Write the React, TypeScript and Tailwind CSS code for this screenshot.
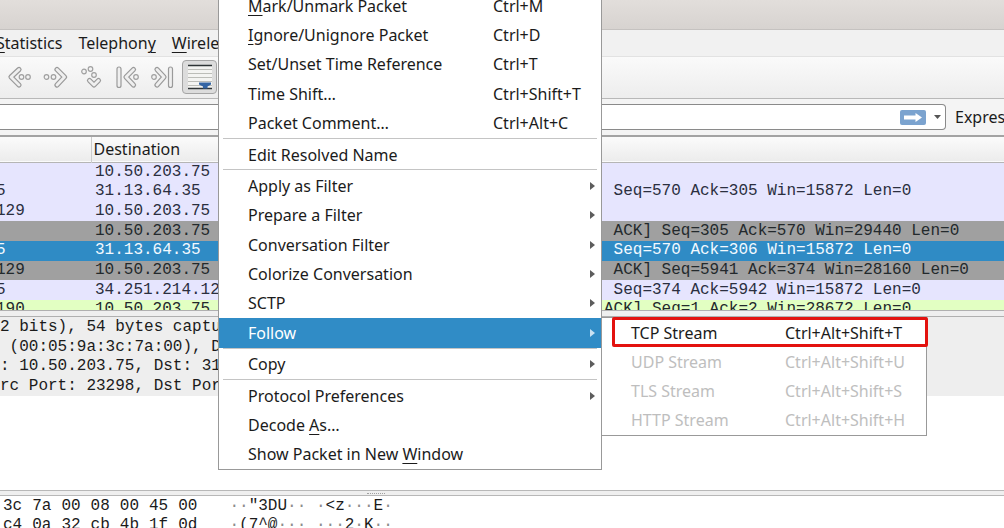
import { ReactNode } from "react";

type Packet = {
  source: string;
  destination: string;
  info: string;
  tone: string;
};

type MenuEntry = {
  label: ReactNode;
  shortcut?: string;
  submenu?: boolean;
  active?: boolean;
  disabled?: boolean;
};

const TCP = "bg-[#e6e5fe] text-[#2b2f3f]";
const CLOSING = "bg-[#a0a0a0] text-[#23292c]";
const SELECTED = "bg-[#2f8bc5] text-[#f2f9ff]";
const HTTP = "bg-[#e2ffc2] text-[#23292c]";

const PACKETS: Packet[] = [
  { source: "", destination: "10.50.203.75", info: "", tone: TCP },
  { source: "5", destination: "31.13.64.35", info: " Seq=570 Ack=305 Win=15872 Len=0", tone: TCP },
  { source: "129", destination: "10.50.203.75", info: "", tone: TCP },
  { source: "", destination: "10.50.203.75", info: " ACK] Seq=305 Ack=570 Win=29440 Len=0", tone: CLOSING },
  { source: "5", destination: "31.13.64.35", info: " Seq=570 Ack=306 Win=15872 Len=0", tone: SELECTED },
  { source: "129", destination: "10.50.203.75", info: " ACK] Seq=5941 Ack=374 Win=28160 Len=0", tone: CLOSING },
  { source: "5", destination: "34.251.214.12", info: " Seq=374 Ack=5942 Win=15872 Len=0", tone: TCP },
  { source: "190", destination: "10.50.203.75", info: "ACK] Seq=1 Ack=2 Win=28672 Len=0", tone: HTTP },
];

const DETAILS = [
  "2 bits), 54 bytes captu",
  " (00:05:9a:3c:7a:00), D",
  ": 10.50.203.75, Dst: 31",
  "rc Port: 23298, Dst Por",
];

const BYTES = [
  { hex: ["3c", "7a", "00", "08", "00", "45", "00"], ascii: '··"3DU·· ·<z···E·' },
  { hex: ["c4", "0a", "32", "cb", "4b", "1f", "0d"], ascii: "·(7^@··· ···2·K··" },
];

const Key = ({ children }: { children: ReactNode }) => (
  <span className="underline decoration-1 underline-offset-3">{children}</span>
);

const MENU_GROUPS: MenuEntry[][] = [
  [
    { label: <><Key>M</Key>ark/Unmark Packet</>, shortcut: "Ctrl+M" },
    { label: <><Key>I</Key>gnore/Unignore Packet</>, shortcut: "Ctrl+D" },
    { label: "Set/Unset Time Reference", shortcut: "Ctrl+T" },
    { label: "Time Shift…", shortcut: "Ctrl+Shift+T" },
    { label: "Packet Comment…", shortcut: "Ctrl+Alt+C" },
  ],
  [{ label: "Edit Resolved Name" }],
  [
    { label: "Apply as Filter", submenu: true },
    { label: "Prepare a Filter", submenu: true },
    { label: "Conversation Filter", submenu: true },
    { label: "Colorize Conversation", submenu: true },
    { label: "SCTP", submenu: true },
    { label: "Follow", submenu: true, active: true },
  ],
  [{ label: "Copy", submenu: true }],
  [
    { label: "Protocol Preferences", submenu: true },
    { label: <>Decode <Key>A</Key>s…</> },
    { label: <>Show Packet in New <Key>W</Key>indow</> },
  ],
];

const FOLLOW_MENU: MenuEntry[] = [
  { label: "TCP Stream", shortcut: "Ctrl+Alt+Shift+T" },
  { label: "UDP Stream", shortcut: "Ctrl+Alt+Shift+U", disabled: true },
  { label: "TLS Stream", shortcut: "Ctrl+Alt+Shift+S", disabled: true },
  { label: "HTTP Stream", shortcut: "Ctrl+Alt+Shift+H", disabled: true },
];

// Grey outline with a light core, shared by all the navigation arrows
const ArrowIcon = ({ d, dots }: { d: string; dots: [number, number][] }) => (
  <svg viewBox="0 0 26 26" className="h-[26px] w-[26px]" fill="none" strokeLinecap="round" strokeLinejoin="round">
    <path d={d} stroke="#9a9a9a" strokeWidth="5.2" />
    <path d={d} stroke="#efefef" strokeWidth="2.8" />
    {dots.map(([cx, cy]) => (
      <circle key={`${cx}-${cy}`} cx={cx} cy={cy} r="2.3" fill="#f3f3f3" stroke="#a0a0a0" strokeWidth="1.2" />
    ))}
  </svg>
);

const NAV_ICONS: { label: string; d: string; dots: [number, number][] }[] = [
  { label: "Previous packet", d: "M13 5.5 L5 13 L13 21", dots: [[15.5, 13], [22, 13]] },
  { label: "Next packet", d: "M15 5.5 L22.5 13 L15 21", dots: [[4.5, 13], [11.5, 13]] },
  { label: "Go to packet", d: "M11.5 16.5 L16 21 L20.5 16.5", dots: [[6, 7.5], [12.5, 5], [16, 11]] },
  { label: "First packet", d: "M5 5 V21.5 M19.5 5.5 L12 13 L19.5 21", dots: [[22, 13]] },
  { label: "Last packet", d: "M20.5 5 V21.5 M7 5.5 L14 13 L7 21", dots: [[4, 13]] },
];

const AutoScrollIcon = () => (
  <svg viewBox="0 0 24 26" className="h-[26px] w-6" fill="none">
    <rect y="1" width="24" height="24" fill="#f4f4f2" />
    <path d="M0 5.5H24M0 9.5H24M0 13.5H24M0 17.5H24M0 21.5H24" stroke="#bcbdb8" />
    <path d="M0 1.5H24M0 24.5H24" stroke="#2e3436" strokeWidth="1.4" />
    <path d="M11 18.5H23V20.5L19.5 22.5V24.5H15V22.5L11 20.5Z" fill="#3465a4" />
  </svg>
);

const MenuItem = ({ entry, nested }: { entry: MenuEntry; nested?: boolean }) => (
  <button
    type="button"
    role="menuitem"
    disabled={entry.disabled}
    className={`flex min-h-0 w-full flex-1 items-center whitespace-nowrap text-left ${
      entry.active ? "bg-[#308cc6] text-white" : entry.disabled ? "text-[#bebebe]" : "text-[#1b1b1b]"
    }`}
  >
    <span className={nested ? "w-[183px] pl-[29px]" : "w-[274px] pl-[29px]"}>{entry.label}</span>
    <span className="flex-1">{entry.shortcut}</span>
    {entry.submenu && (
      <svg viewBox="0 0 5 8" className={`mr-1.5 h-2 w-[5px] ${entry.active ? "fill-[#c9e2f2]" : "fill-[#5c5c5c]"}`}>
        <path d="M0 0L5 4L0 8Z" />
      </svg>
    )}
  </button>
);

const ContextMenu = () => (
  <div
    role="menu"
    className="absolute -top-[10px] left-[218px] flex h-[480px] w-[384px] flex-col border border-[#999999] bg-white"
  >
    {MENU_GROUPS.map((group, index) => (
      <div key={index} className="contents">
        {index > 0 && <div role="separator" className="mx-1 mb-px h-px bg-[#c4c4c4]" />}
        {group.map((entry, i) => (
          <MenuItem key={i} entry={entry} />
        ))}
      </div>
    ))}
  </div>
);

const FollowMenu = () => (
  <div
    role="menu"
    className="absolute left-[601px] top-[317px] flex h-[119px] w-[326px] flex-col border border-[#999999] bg-white"
  >
    {FOLLOW_MENU.map((entry, i) => (
      <MenuItem key={i} entry={entry} nested />
    ))}
    <div className="pointer-events-none absolute -right-[2px] -top-px left-[10px] h-[30px] rounded-xs border-3 border-[#e3120f]" />
  </div>
);

export default function App() {
  return (
    <div className="relative flex h-screen flex-col overflow-hidden bg-[#efefef] font-['Noto_Sans',sans-serif] text-base text-[#1b1b1b]">
      <div className="h-[30px] shrink-0 border-b border-[#c5c2c0] bg-linear-to-b from-[#e2dedb] to-[#d7d3d0]" />

      <nav className="-ml-1 flex h-[26px] shrink-0 items-center gap-4 bg-[#f1f1f1]">
        <button type="button"><Key>S</Key>tatistics</button>
        <button type="button">Telephon<Key>y</Key></button>
        <button type="button"><Key>W</Key>ireless</button>
      </nav>

      <div className="flex h-[43px] shrink-0 items-center gap-1.5 border-b border-t border-b-[#b8b8b8] border-t-[#e2e2e2] bg-linear-to-b from-[#fafafa] to-[#ededed] pb-0.5 pl-1.5">
        <div className="flex gap-2.5">
          {NAV_ICONS.map((icon) => (
            <button key={icon.label} type="button" aria-label={icon.label}>
              <ArrowIcon d={icon.d} dots={icon.dots} />
            </button>
          ))}
        </div>
        <button
          type="button"
          aria-label="Auto scroll"
          className="flex h-[34px] w-[35px] items-center justify-center rounded-sm border border-[#a5a5a5] bg-[#dcdcdc]"
        >
          <AutoScrollIcon />
        </button>
      </div>

      <div className="flex h-[38px] shrink-0 items-center border-b-2 border-[#a3a3a3] bg-[#f4f4f4]">
        <div className="flex h-[26px] flex-1 items-center rounded-r-sm border border-l-0 border-[#8a8a8a] bg-white">
          <input type="text" aria-label="Display filter" className="min-w-0 flex-1 outline-none" />
          <button type="button" aria-label="Apply filter" className="rounded-xs bg-[#7ba3cf]">
            <svg viewBox="0 0 26 15" className="h-[15px] w-[26px] fill-white">
              <path d="M4 5.5H15.5V3L22 7.5L15.5 12V9.5H4Z" />
            </svg>
          </button>
          <button type="button" aria-label="Recent filters" className="pl-2 pr-1">
            <svg viewBox="0 0 7 4" className="h-1 w-[7px] fill-[#555555]">
              <path d="M0 0H7L3.5 4Z" />
            </svg>
          </button>
        </div>
        <button type="button" className="w-[58px] overflow-hidden whitespace-nowrap pl-[9px] text-left">
          Expression…
        </button>
      </div>

      <div className="h-[174px] shrink-0 overflow-hidden border-b border-[#b0b0b0]">
        <table className="-ml-1 w-[calc(100%+4px)] table-fixed border-collapse text-left">
          <colgroup>
            <col className="w-[95px]" />
            <col className="w-[509px]" />
            <col />
          </colgroup>
          <thead>
            <tr className="h-[25px] border-b border-[#b5b5b5] bg-linear-to-b from-[#fbfbfb] to-[#ececec]">
              <th aria-label="Source" className="border-r border-[#cccccc] p-0" />
              <th className="p-0 pl-0.5 font-normal leading-6">Destination</th>
              <th aria-label="Info" className="p-0" />
            </tr>
          </thead>
        </table>
        <table className="-ml-1 h-[157px] w-[calc(100%+4px)] table-fixed border-collapse font-['Liberation_Mono',monospace] leading-[19px]">
          <colgroup>
            <col className="w-[95px]" />
            <col className="w-[509px]" />
            <col />
          </colgroup>
          <tbody>
            {PACKETS.map((packet, i) => (
              <tr key={i} className={packet.tone}>
                <td className="p-0">{packet.source}</td>
                <td className="p-0 pl-1">{packet.destination}</td>
                <td className="whitespace-pre p-0 pl-1">{packet.info}</td>
              </tr>
            ))}
          </tbody>
        </table>
      </div>

      <div className="mt-[5px] flex-1 overflow-hidden border-t border-[#b0b0b0] bg-white font-['Liberation_Mono',monospace] leading-[19px]">
        <div className="grid h-[79px] grid-rows-4 bg-[#eeeeee] pt-px">
          {DETAILS.map((line) => (
            <p key={line} className="whitespace-pre">{line}</p>
          ))}
        </div>
      </div>

      <div className="flex h-[6px] shrink-0 items-center justify-center border-y border-[#b8b8b8] pr-[252px]">
        <div className="w-[18px] border-t border-dotted border-[#a0a0a0]" />
      </div>

      <div className="h-8 shrink-0 bg-white pl-[3px] pt-px font-['Liberation_Mono',monospace] leading-[19px]">
        {BYTES.map((row) => (
          <div key={row.ascii} className="flex gap-8">
            <div className="flex gap-2.5">
              {row.hex.map((byte, i) => (
                <span key={i}>{byte}</span>
              ))}
            </div>
            <span className="whitespace-pre">
              {row.ascii.split("").map((char, i) => (
                <span key={i} className={char === "·" ? "text-[#8c8c8c]" : ""}>{char}</span>
              ))}
            </span>
          </div>
        ))}
      </div>

      <ContextMenu />
      <FollowMenu />
    </div>
  );
}
